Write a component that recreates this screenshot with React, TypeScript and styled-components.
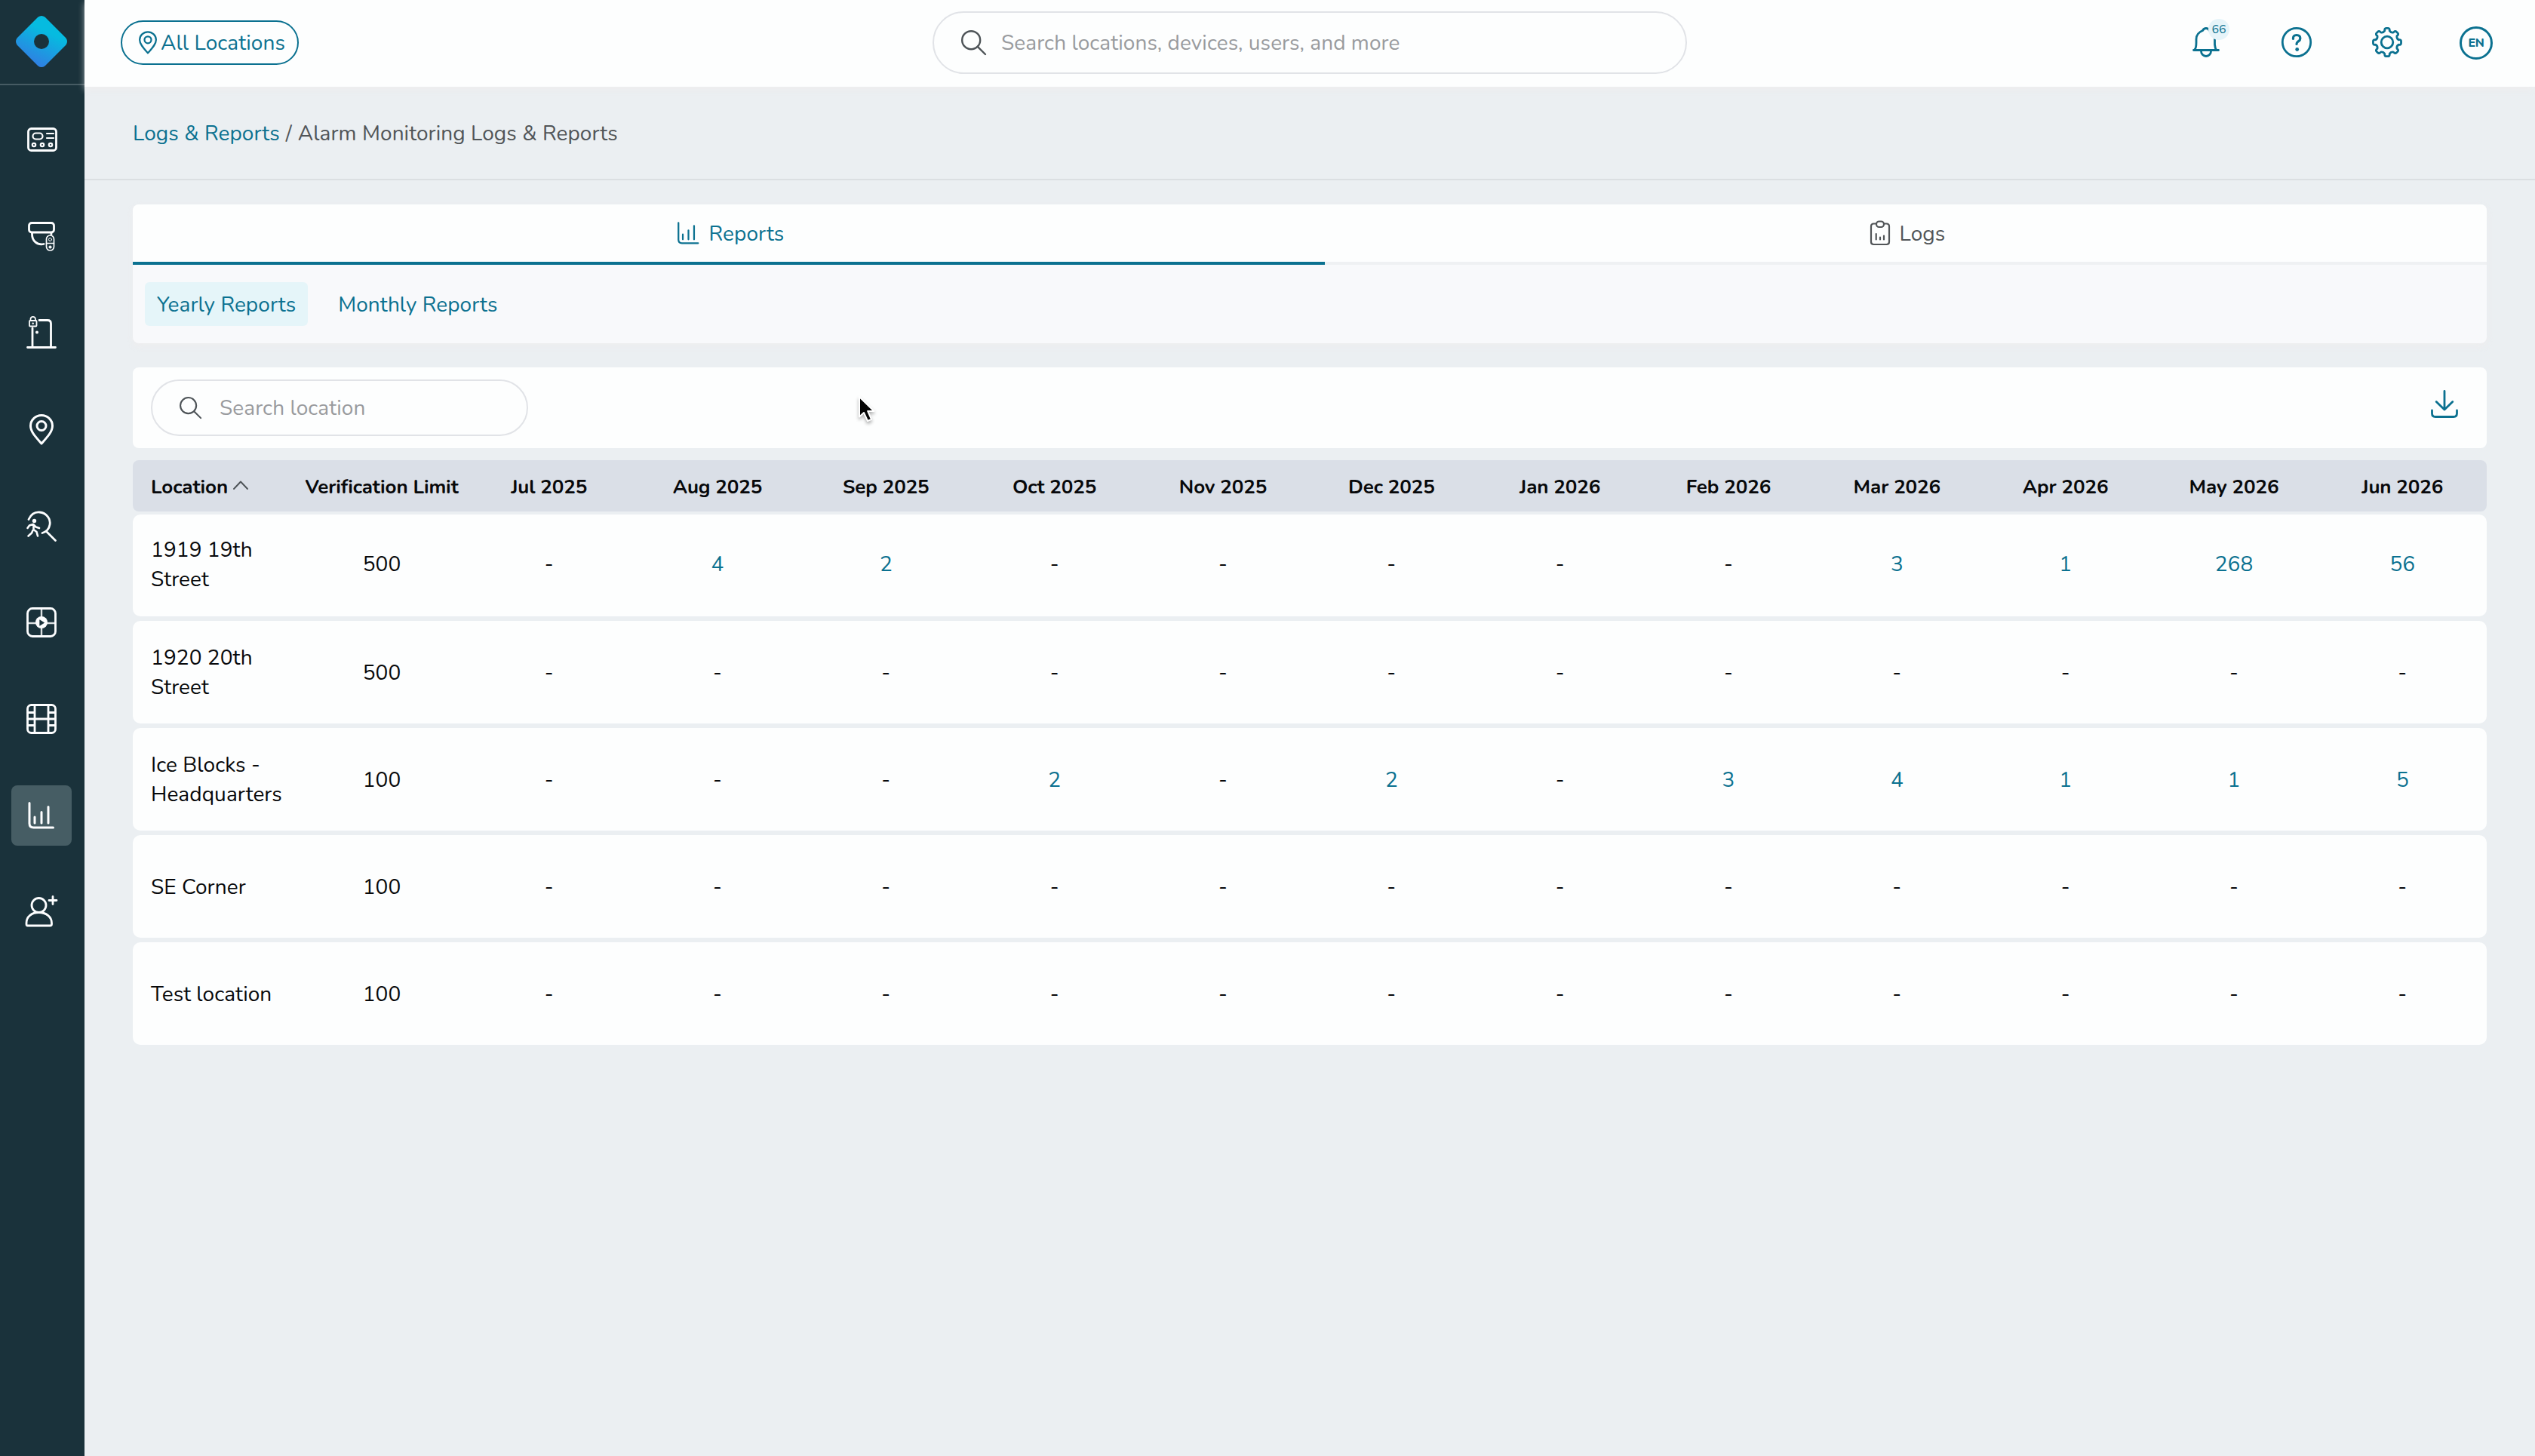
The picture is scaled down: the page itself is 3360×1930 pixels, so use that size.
import React from 'react';
import styled, { createGlobalStyle } from 'styled-components';

const GlobalStyle = createGlobalStyle`
  *, *::before, *::after {
    box-sizing: border-box;
  }

  body {
    margin: 0;
    background: #ebeff2;
    color: #08090b;
    font-family: Nunito, Lato, 'Open Sans', sans-serif;
    font-size: 28px;
    font-weight: 450;
    line-height: 39px;
    letter-spacing: 0.08px;
  }

  button, input {
    font: inherit;
    letter-spacing: inherit;
    color: inherit;
  }

  svg {
    display: block;
    flex: none;
    overflow: visible;
  }
`;

const Shell = styled.div`
  display: grid;
  grid-template-columns: 112px 1fr;
  min-height: 1930px;
`;

const Sidebar = styled.nav`
  background: #1a323b;
  color: #fdfeff;
`;

const LogoBox = styled.div`
  height: 113px;
  padding: 20px;
  border-bottom: 2px solid #465b63;
`;

const NavList = styled.div`
  display: flex;
  flex-direction: column;
  gap: 48px;
  padding: 32px 0 0 15px;
`;

const NavButton = styled.button<{ $active?: boolean }>`
  display: flex;
  align-items: center;
  justify-content: center;
  width: 80px;
  height: 80px;
  padding: 0;
  border: 0;
  border-radius: 8px;
  background: ${({ $active }) => ($active ? '#465d64' : 'transparent')};
`;

const TopBar = styled.header`
  display: grid;
  grid-template-columns: 1fr 1000px 1fr;
  align-items: center;
  height: 115px;
  padding: 0 56px 2px 48px;
  background: #fdfefe;
  box-shadow: 0 4px 8px rgba(240, 236, 236, 0.6);
`;

const LocationPill = styled.button`
  display: flex;
  align-items: center;
  gap: 5px;
  width: 236px;
  height: 59px;
  padding: 0 0 0 22px;
  border: 2px solid #0b7190;
  border-radius: 30px;
  background: transparent;
  color: #0b7190;
`;

// Nudges a label onto the optical centre of its icon
const Label = styled.span`
  padding-top: 2px;
`;

const SearchBox = styled.label<{ $small?: boolean }>`
  display: flex;
  align-items: center;
  gap: ${({ $small }) => ($small ? 24 : 20)}px;
  width: ${({ $small }) => ($small ? 500 : 1000)}px;
  height: ${({ $small }) => ($small ? 75 : 83)}px;
  margin-left: ${({ $small }) => ($small ? 0 : 4)}px;
  padding-left: 36px;
  border: 2px solid #e1e3e7;
  border-radius: 42px;
  color: #4d5357;
`;

const SearchInput = styled.input`
  flex: 1;
  min-width: 0;
  padding: 2px 0 0;
  border: 0;
  outline: 0;
  background: transparent;

  &::placeholder {
    color: #999b9e;
    opacity: 1;
  }
`;

const TopActions = styled.div`
  display: flex;
  justify-content: flex-end;
  align-items: center;
  gap: 76px;
  color: #0b7190;
`;

const ActionButton = styled.button`
  position: relative;
  display: flex;
  justify-content: center;
  width: 44px;
  padding: 0 0 1px;
  border: 0;
  background: transparent;
`;

const Badge = styled.span`
  position: absolute;
  top: -11px;
  right: -9px;
  width: 28px;
  height: 28px;
  border-radius: 50%;
  background: #e6f4f9;
  font-size: 16px;
  line-height: 29px;
  letter-spacing: 0;
  text-align: center;
`;

const Avatar = styled.div`
  width: 44px;
  height: 44px;
  margin-left: -2px;
  border: 3px solid #0b7190;
  border-radius: 50%;
  font-size: 16px;
  font-weight: 800;
  line-height: 39px;
  letter-spacing: -0.3px;
  text-align: center;
`;

const Breadcrumbs = styled.div`
  display: flex;
  align-items: center;
  gap: 8px;
  height: 124px;
  padding: 2px 64px 0;
  border-bottom: 2px solid #dbdfe2;
  color: #515558;
`;

const CrumbLink = styled.a`
  color: #0b7190;
`;

const Content = styled.main`
  padding: 32px 64px;
`;

const TabsCard = styled.section`
  overflow: hidden;
  margin-bottom: 32px;
  border-radius: 8px;
  background: #f8f9fb;
  box-shadow: 0 4px 8px rgba(240, 236, 236, 0.6);
`;

const TabRow = styled.div`
  display: grid;
  grid-template-columns: 1580px 1fr;
`;

const Tab = styled.button<{ $active?: boolean }>`
  display: flex;
  align-items: center;
  justify-content: center;
  gap: 13px;
  height: 80px;
  padding: 0 0 0 5px;
  border: 0;
  border-bottom: 4px solid ${({ $active }) => ($active ? '#0b7190' : '#eff1f3')};
  background: #fdfefe;
  color: ${({ $active }) => ($active ? '#0b7190' : '#515558')};
`;

const SubTabs = styled.div`
  display: flex;
  gap: 24px;
  height: 104px;
  padding: 23px 16px;
`;

const SubTab = styled.button<{ $active?: boolean }>`
  height: 58px;
  padding: 2px 16px 0;
  border: 0;
  border-radius: 6px;
  background: ${({ $active }) => ($active ? '#e5f5f9' : 'transparent')};
  color: #0b7190;
`;

const Toolbar = styled.section`
  display: flex;
  align-items: center;
  justify-content: space-between;
  height: 107px;
  margin-bottom: 16px;
  padding: 0 38px 0 24px;
  border-radius: 8px;
  background: #fdfefe;
`;

const DownloadButton = styled.button`
  padding: 0 0 10px;
  border: 0;
  background: transparent;
  color: #0b7190;
`;

const HeadRow = styled.div`
  display: grid;
  grid-template-columns: 220px 220px repeat(12, 1fr);
  align-items: center;
  height: 68px;
  margin-bottom: 4px;
  padding-top: 2px;
  border-radius: 8px;
  background: #dadfe7;
  font-size: 26px;
  font-weight: 700;
  letter-spacing: -0.12px;
  text-align: center;
`;

const Rows = styled.div`
  display: grid;
  gap: 6px;
`;

const Row = styled.div`
  display: grid;
  grid-template-columns: 220px 220px repeat(12, 1fr);
  align-items: center;
  height: 136px;
  padding-top: 2px;
  border-radius: 10px;
  background: #fdfefe;
  text-align: center;

  &:first-child {
    height: 135px;
    padding: 0 0 2px;
  }
`;

const LocationHead = styled.div`
  display: flex;
  align-items: center;
  gap: 7px;
  padding-left: 24px;

  svg {
    margin-bottom: 4px;
  }
`;

const LocationCell = styled.div`
  padding: 0 16px 0 24px;
  text-align: left;
`;

const Cell = styled.div<{ $link?: boolean }>`
  color: ${({ $link }) => ($link ? '#0b7190' : 'inherit')};
`;

// Pointer floats above the page
const Pointer = styled.svg`
  position: absolute;
  top: 524px;
  left: 1137px;
  filter: drop-shadow(0 3px 2px rgba(0, 0, 0, 0.3));
`;

interface IconProps {
  width: number;
  height: number;
  stroke?: number;
  children: React.ReactNode;
}

const Icon: React.FC<IconProps> = ({ width, height, stroke = 2.8, children }) => (
  <svg
    width={width}
    height={height}
    viewBox={`0 0 ${width} ${height}`}
    fill="none"
    stroke="currentColor"
    strokeWidth={stroke}
    strokeLinecap="round"
    strokeLinejoin="round"
  >
    {children}
  </svg>
);

const Logo = () => (
  <svg width="70" height="70" viewBox="0 0 70 70">
    <defs>
      <linearGradient id="logo" x1="0.3" y1="0.9" x2="0.7" y2="0.1">
        <stop offset="0" stopColor="#2f80e2" />
        <stop offset="0.75" stopColor="#06bbe0" />
      </linearGradient>
    </defs>
    <path
      fill="url(#logo)"
      fillRule="evenodd"
      d="M30.5 2.5Q35 -.5 39.5 2.5L67.5 30.5Q70.5 35 67.5 39.5L39.5 67.5Q35 70.5 30.5 67.5L2.5 39.5Q-.5 35 2.5 30.5ZM35 25A10 10 0 1 0 35 45A10 10 0 1 0 35 25Z"
    />
  </svg>
);

const PanelIcon = () => (
  <Icon width={38} height={40}>
    <rect x="1.500" y="5.500" width="37" height="29" rx="4" />
    <rect x="7.500" y="11.500" width="13" height="8" rx="4" strokeWidth="2.200" />
    <path d="M26 12h9M26 18h9" strokeWidth="2.200" />
    <circle cx="9" cy="27" r="2.200" strokeWidth="2.200" />
    <circle cx="20" cy="27" r="2.200" strokeWidth="2.200" />
    <circle cx="31" cy="27" r="2.200" strokeWidth="2.200" />
  </Icon>
);

const CameraIcon = () => (
  <Icon width={40} height={40}>
    <rect x="3.500" y="2.500" width="33" height="12.500" rx="3.500" />
    <path d="M7.500 15.500v2C7.500 26 14 32.300 23 30.500M33 15.500v2" />
    <rect x="26.500" y="19" width="10" height="20" rx="5" strokeWidth="1.700" />
    <path d="M26.500 29.500h10" strokeWidth="1.500" />
    <circle cx="31.500" cy="24.500" r="2" strokeWidth="1" />
    <circle cx="31.500" cy="34.500" r="1.600" fill="currentColor" strokeWidth="1" />
  </Icon>
);

const DoorIcon = () => (
  <Icon width={40} height={44}>
    <path d="M1.500 41.500h37M8 16v25M17 5.500h11Q32.500 5.500 32.500 10v31" />
    <rect x="4" y="6" width="9.500" height="7.500" rx="1" strokeWidth="1.800" />
    <path d="M5.500 6V4a3.200 3.200 0 0 1 6.400 0v2" strokeWidth="1.800" />
    <circle cx="8.700" cy="9.800" r="1.200" fill="currentColor" stroke="none" />
    <circle cx="14" cy="21.500" r="2" fill="currentColor" stroke="none" />
  </Icon>
);

const PinIcon: React.FC<{ small?: boolean }> = ({ small }) => (
  <svg
    width={small ? 24 : 32}
    height={small ? 31 : 41}
    viewBox="0 0 32 41"
    fill="none"
    stroke="currentColor"
    strokeWidth="3"
    strokeLinejoin="round"
  >
    <path d="M16 39C9 31 1.500 23.500 1.500 15.500a14.500 14 0 0 1 29 0C30.500 23.500 23 31 16 39Z" />
    <circle cx="16" cy="15.500" r="6" />
  </svg>
);

const PersonSearchIcon = () => (
  <Icon width={40} height={41}>
    <path d="M3 11.500C6.500 4 12 1.500 17.500 2c9 .8 14.800 8.500 13.500 16.500-1 5.800-5 9.500-10 11M26.500 27.500 38.500 39.500" />
    <circle cx="10.500" cy="13.500" r="2.700" fill="currentColor" stroke="none" />
    <path d="M1.500 23l2.500-3.500 5-1.500 3.500 3.500 4.500 1.500M9.500 18.500v6.500l4 3 1.500 5.500M8.500 26l-1.500 3.500-4.500 4" strokeWidth="2.600" />
  </Icon>
);

const GridPlayIcon = () => (
  <Icon width={40} height={40}>
    <rect x="1.500" y="1.500" width="37" height="37" rx="6.500" />
    <path d="M20 2v36M2 21h36" strokeWidth="2.400" opacity="0.85" />
    <circle cx="20" cy="20" r="8" fill="currentColor" stroke="none" />
    <path d="M18 17l5.500 3.500L18 24Z" fill="#1a323b" stroke="#1a323b" strokeWidth="0.800" />
  </Icon>
);

const FilmIcon = () => (
  <Icon width={40} height={40}>
    <rect x="1.500" y="1.500" width="37" height="37" rx="5" />
    <path d="M11 2v36M29 2v36M11 20h18M2 11.500h9M2 20h9M2 28.500h9M29 11.500h9M29 20h9M29 28.500h9" />
  </Icon>
);

interface ChartIconProps {
  width?: number;
  height?: number;
  stroke?: number;
}

const ChartIcon: React.FC<ChartIconProps> = ({ width = 36, height = 36, stroke = 3 }) => (
  <svg
    width={width}
    height={height}
    viewBox="0 0 35 36"
    fill="none"
    stroke="currentColor"
    strokeWidth={stroke}
    strokeLinecap="round"
    strokeLinejoin="round"
  >
    <path d="M1.500 1.500v27Q1.500 34 7 34h26M8.500 20v8M17.500 13.500v14.500M26.500 6.500v21.500" />
  </svg>
);

const AddUserIcon = () => (
  <Icon width={42} height={45}>
    <circle cx="17.500" cy="13" r="9.500" />
    <path d="M17.500 22.500C27 22.500 34.500 28 34.500 36.500v1.500Q34.500 40 32.500 40h-30Q1 40 1 38v-1.500C1 28 8 22.500 17.500 22.500ZM36 1.500v10M31 6.500h10" />
  </Icon>
);

const SearchIcon: React.FC<{ size: number }> = ({ size }) => (
  <svg
    width={size}
    height={size}
    viewBox="0 0 33 33"
    fill="none"
    stroke="currentColor"
    strokeWidth="2.400"
    strokeLinecap="round"
  >
    <circle cx="13.200" cy="13.200" r="12" />
    <path d="M21.800 21.800 32 32" />
  </svg>
);

const BellIcon = () => (
  <Icon width={36} height={40}>
    <path d="M1.500 30.500h33M3 29.500q2-2 2-9V16Q5 8 13.500 4.500q1.500-3 4.500-3t4.500 3M29.500 15v8q.5 5 2 7M11.500 31v1a6.300 6.300 0 0 0 13 0v-1" />
  </Icon>
);

const HelpIcon = () => (
  <Icon width={40} height={40}>
    <circle cx="20" cy="20" r="18.700" />
    <path d="M15.500 15.500Q15 10.500 20 10.500T24.800 15Q24.800 17.500 22 19 20 20.500 20 22.500" strokeWidth="3.200" />
    <circle cx="20.700" cy="29.500" r="2.400" fill="currentColor" stroke="none" />
  </Icon>
);

// 8-toothed outline, one repeated tooth per 45 degrees
const gearPath = (() => {
  const points: string[] = [];
  for (let i = 0; i < 8; i += 1) {
    const at = (radius: number, deg: number) => {
      const a = ((i * 45 + deg) * Math.PI) / 180;
      return `${(20 + radius * Math.sin(a)).toFixed(2)} ${(20 - radius * Math.cos(a)).toFixed(2)}`;
    };
    points.push(
      `${i === 0 ? 'M' : 'L'}${at(15.5, -12)}Q${at(19, -11)} ${at(18.6, -4)}L${at(18.6, 4)}Q${at(19, 11)} ${at(15.5, 12)}Q${at(13.2, 22.5)} ${at(15.5, 33)}`
    );
  }
  return `${points.join('')}Z`;
})();

const GearIcon = () => (
  <Icon width={40} height={40}>
    <path d={gearPath} />
    <circle cx="20" cy="20" r="7.800" />
  </Icon>
);

const ClipboardIcon = () => (
  <Icon width={26} height={34} stroke={2.2}>
    <path d="M7.500 4.500H4.500Q1 4.500 1 8v20.500Q1 32 4.500 32h17Q25 32 25 28.500V8Q25 4.500 21.500 4.500h-3" />
    <rect x="8" y="1.500" width="10" height="7.500" rx="3.700" />
    <path d="M7.700 18v7.500M13 22.500v3M18 20.500v5" />
  </Icon>
);

const DownloadIcon = () => (
  <Icon width={36} height={37} stroke={2.8}>
    <path d="M18 1.500v24.500M7.200 15.500 18 26 28.800 15.500M1.500 27v4Q1.500 35.500 6 35.500h24Q34.500 35.500 34.500 31v-4" />
  </Icon>
);

const navItems = [
  { id: 'panels', icon: <PanelIcon /> },
  { id: 'cameras', icon: <CameraIcon /> },
  { id: 'doors', icon: <DoorIcon /> },
  { id: 'locations', icon: <PinIcon /> },
  { id: 'people', icon: <PersonSearchIcon /> },
  { id: 'views', icon: <GridPlayIcon /> },
  { id: 'clips', icon: <FilmIcon /> },
  { id: 'reports', icon: <ChartIcon />, active: true },
  { id: 'users', icon: <AddUserIcon /> },
];

const months = [
  'Jul 2025', 'Aug 2025', 'Sep 2025', 'Oct 2025', 'Nov 2025', 'Dec 2025',
  'Jan 2026', 'Feb 2026', 'Mar 2026', 'Apr 2026', 'May 2026', 'Jun 2026',
];

interface LocationReport {
  name: string;
  limit: number;
  counts: number[];
}

const reports: LocationReport[] = [
  { name: '1919 19th Street', limit: 500, counts: [0, 4, 2, 0, 0, 0, 0, 0, 3, 1, 268, 56] },
  { name: '1920 20th Street', limit: 500, counts: [0, 0, 0, 0, 0, 0, 0, 0, 0, 0, 0, 0] },
  { name: 'Ice Blocks - Headquarters', limit: 100, counts: [0, 0, 0, 2, 0, 2, 0, 3, 4, 1, 1, 5] },
  { name: 'SE Corner', limit: 100, counts: [0, 0, 0, 0, 0, 0, 0, 0, 0, 0, 0, 0] },
  { name: 'Test location', limit: 100, counts: [0, 0, 0, 0, 0, 0, 0, 0, 0, 0, 0, 0] },
];

const App: React.FC = () => {
  return (
    <>
      <GlobalStyle />
      <Shell>
        <Sidebar>
          <LogoBox>
            <Logo />
          </LogoBox>
          <NavList>
            {navItems.map((item) => (
              <NavButton key={item.id} $active={item.active}>
                {item.icon}
              </NavButton>
            ))}
          </NavList>
        </Sidebar>
        <div>
          <TopBar>
            <LocationPill>
              <PinIcon small />
              <Label>All Locations</Label>
            </LocationPill>
            <SearchBox>
              <SearchIcon size={33} />
              <SearchInput placeholder="Search locations, devices, users, and more" />
            </SearchBox>
            <TopActions>
              <ActionButton>
                <BellIcon />
                <Badge>66</Badge>
              </ActionButton>
              <ActionButton>
                <HelpIcon />
              </ActionButton>
              <ActionButton>
                <GearIcon />
              </ActionButton>
              <Avatar>EN</Avatar>
            </TopActions>
          </TopBar>
          <Breadcrumbs>
            <CrumbLink>Logs &amp; Reports</CrumbLink>
            <span>/</span>
            <span>Alarm Monitoring Logs &amp; Reports</span>
          </Breadcrumbs>
          <Content>
            <TabsCard>
              <TabRow>
                <Tab $active>
                  <ChartIcon width={29} height={30} stroke={2.7} />
                  <Label>Reports</Label>
                </Tab>
                <Tab>
                  <ClipboardIcon />
                  <Label>Logs</Label>
                </Tab>
              </TabRow>
              <SubTabs>
                <SubTab $active>Yearly Reports</SubTab>
                <SubTab>Monthly Reports</SubTab>
              </SubTabs>
            </TabsCard>
            <Toolbar>
              <SearchBox $small>
                <SearchIcon size={29} />
                <SearchInput placeholder="Search location" />
              </SearchBox>
              <DownloadButton>
                <DownloadIcon />
              </DownloadButton>
            </Toolbar>
            <HeadRow>
              <LocationHead>
                Location
                <Icon width={20} height={13} stroke={1.9}>
                  <path d="M1 11 10 1.500 19 11" stroke="#4d5357" />
                </Icon>
              </LocationHead>
              <div>Verification Limit</div>
              {months.map((month) => (
                <div key={month}>{month}</div>
              ))}
            </HeadRow>
            <Rows>
              {reports.map((report) => (
                <Row key={report.name}>
                  <LocationCell>{report.name}</LocationCell>
                  <Cell>{report.limit}</Cell>
                  {report.counts.map((count, i) => (
                    <Cell key={months[i]} $link={count > 0}>
                      {count || '-'}
                    </Cell>
                  ))}
                </Row>
              ))}
            </Rows>
          </Content>
        </div>
      </Shell>
      <Pointer width="24" height="36" viewBox="0 0 24 36">
        <path
          d="M2 2v26.500l6-5.500 5 11 5-2.200-4.800-10.800h8.300Z"
          fill="#050505"
          stroke="#ffffff"
          strokeWidth="2"
          strokeLinejoin="round"
        />
      </Pointer>
    </>
  );
};

export default App;
